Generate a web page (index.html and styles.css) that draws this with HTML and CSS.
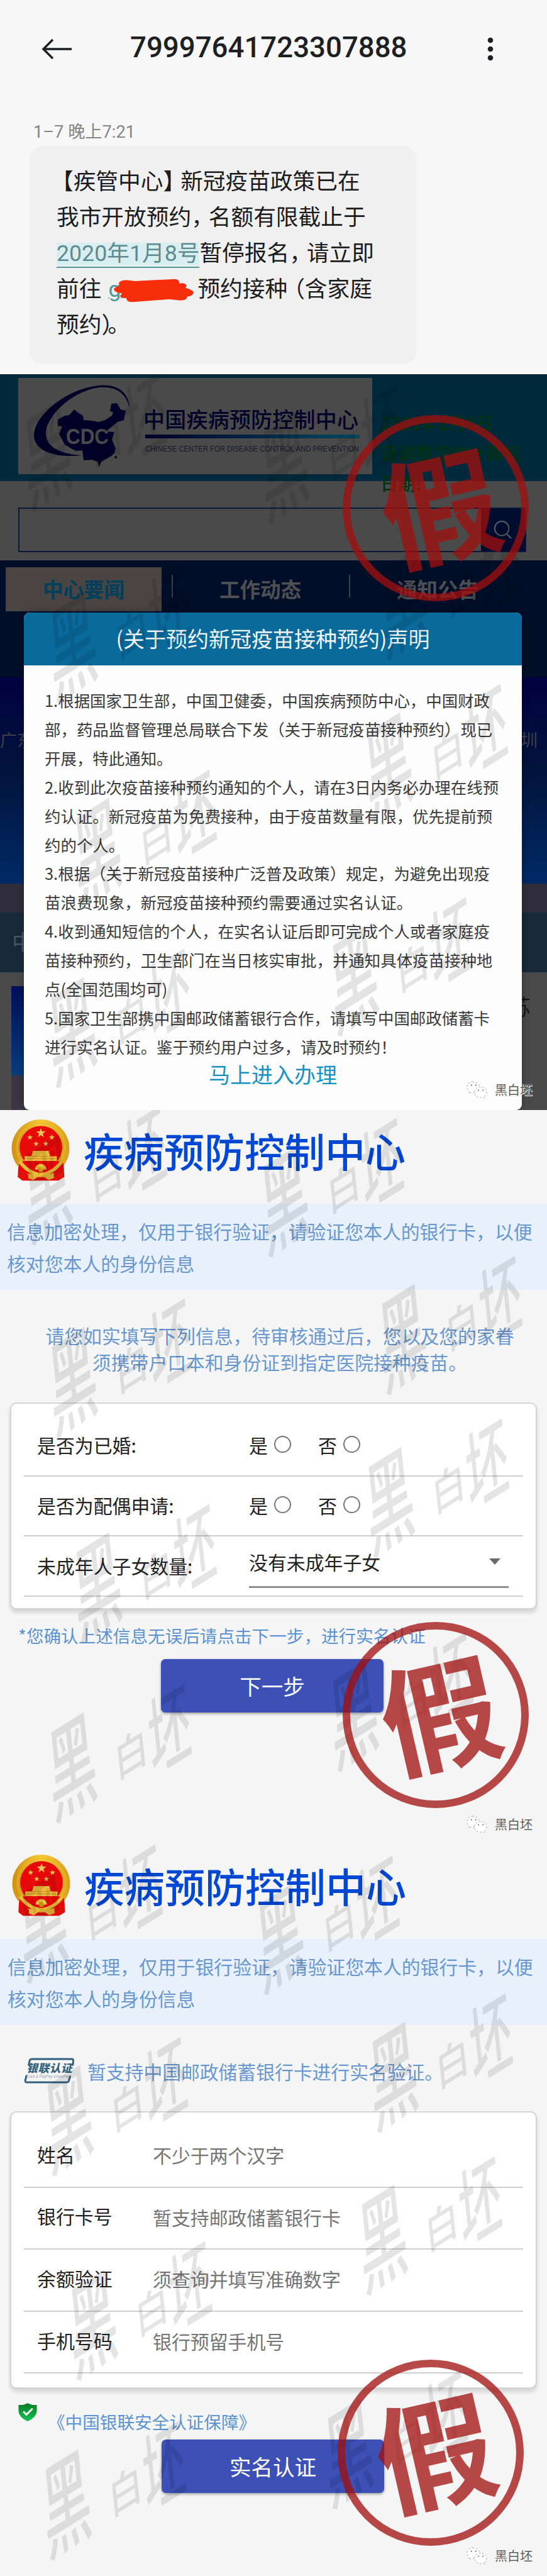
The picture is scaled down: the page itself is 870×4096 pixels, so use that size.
FILE: index.html
```html
<!DOCTYPE html>
<html lang="zh-CN">
<head>
<meta charset="utf-8">
<title>疫苗预约诈骗示例</title>
<link rel="stylesheet" href="styles.css">
</head>
<body>
<svg class="defs" width="0" height="0" aria-hidden="true">
  <defs>
    <linearGradient id="rule" x1="0" x2="1"><stop offset="0" stop-color="#000028"/><stop offset="1" stop-color="#00485e"/></linearGradient>
    <linearGradient id="gold" x1="0" x2="1"><stop offset="0" stop-color="#cf8f14"/><stop offset=".5" stop-color="#f6c936"/><stop offset="1" stop-color="#d99f1c"/></linearGradient>
    <linearGradient id="green" x1="0" y1="0" x2="0" y2="1"><stop offset="0" stop-color="#0a7a22"/><stop offset="1" stop-color="#12c455"/></linearGradient>
    <polygon id="star" points="0,-10 2.5,-3 10,-3 4,1.5 6,9 0,4.5 -6,9 -4,1.5 -10,-3 -2.5,-3"/>
    <symbol id="emblem" viewBox="60 38 326 350">
      <path d="M100 285 L350 285 L356 364 L322 384 L122 384 L96 364Z" fill="#e00f0a"/>
      <circle cx="223" cy="204" r="161" fill="url(#gold)"/>
      <circle cx="225" cy="198" r="134" fill="none" stroke="#e9b92c" stroke-width="8" stroke-dasharray="9 5"/>
      <circle cx="225" cy="198" r="119" fill="#e8090a"/>
      <path d="M104 285L128 275H322L350 285L354 330L300 345H150L100 330Z" fill="#e8090a"/>
      <path d="M112 268Q160 335 224 340Q290 335 336 268L348 284Q300 352 224 356Q146 352 100 284Z" fill="#edbd38"/>
      <g fill="#ecc65a">
        <use href="#star" transform="translate(225 118) scale(2.7)"/>
        <use href="#star" transform="translate(164 142) scale(1.6)"/>
        <use href="#star" transform="translate(286 142) scale(1.6)"/>
        <use href="#star" transform="translate(198 178) scale(1.5)"/>
        <use href="#star" transform="translate(252 178) scale(1.5)"/>
      </g>
      <path d="M180 218H268L276 248H314V274H134V248H172Z" fill="#eebc3c"/>
      <path d="M176 249H272M140 262H308" stroke="#c98a18" stroke-width="4"/>
      <path d="M192 322A32 32 0 0 1 256 322Z" fill="#f2c53c"/>
      <circle cx="224" cy="322" r="14" fill="#d99f1c"/>
      <path d="M155 345Q225 372 296 340L298 368L268 380L240 362H208L182 380L155 372Z" fill="#e8b43a"/>
    </symbol>
    <symbol id="mark" viewBox="0 0 302 222" overflow="visible">
      <text class="brush" transform="translate(38 196) rotate(-32) skewX(-26) scale(.78 1.3)" font-size="112">黑</text>
      <text class="brush" transform="translate(139 134) rotate(-32) skewX(-26)" font-size="62">白</text>
      <text class="brush" transform="translate(196 124) rotate(-32) skewX(-26) scale(.74 1.16)" font-size="104">坯</text>
    </symbol>
    <symbol id="wechat" viewBox="0 0 38 32">
      <g fill="#fff" stroke="#8b8b8b" stroke-width=".9" stroke-dasharray="3 3.4">
        <path d="M12 1C5 1 1 5.500 1 11c0 3.500 1.500 6 4 8l-1 4 4.500-2.500c7 1.500 15-2 15-9.500C23.500 5 19 1 12 1Z"/>
        <path d="M26 11c-7 0-11.500 4-11.500 9.500S19 30 26 30c1.500 0 3-.3 4.500-.8L34 31l-.8-3.500c2.400-1.800 3.800-4.200 3.800-7C37 15 32.500 11 26 11Z"/>
      </g>
      <g fill="#666"><circle cx="9" cy="7.500" r="1.200"/><circle cx="17" cy="7.500" r="1.200"/><circle cx="22" cy="16.500" r="1.100"/><circle cx="30" cy="16.500" r="1.100"/></g>
    </symbol>
  </defs>
</svg>

<main class="page">
  <section class="sms">
    <header class="sms-bar">
      <svg class="back" viewBox="0 0 50 34"><path d="M18 2L3 17L18 32M3 17H48" fill="none" stroke="#1d1f22" stroke-width="3.400"/></svg>
      <h1 class="sender">79997641723307888</h1>
      <svg class="more" viewBox="0 0 10 38"><g fill="#1d1f22"><circle cx="5" cy="5" r="4.300"/><circle cx="5" cy="19" r="4.300"/><circle cx="5" cy="33" r="4.300"/></g></svg>
    </header>
    <p class="stamp-time">1–7 晚上7:21</p>
    <div class="bubble">
      <p><span class="open">【</span>疾管中心<span class="t">】</span>新冠疫苗政策已在</p>
      <p>我市开放预约<span class="t">，</span>名额有限截止于</p>
      <p><a class="date">2020年1月8号</a>暂停报名<span class="t">，</span>请立即</p>
      <p class="mixed"><span>前往</span><span class="redacted"><a class="url">g</a><svg class="blob" viewBox="0 0 128 58" preserveAspectRatio="none"><path d="M8 10Q12 3 22 4L34 6L98 1Q105 3 104 12Q113 9 116 17L114 22Q127 28 127 34Q125 43 116 44Q118 52 106 53L88 50L30 57Q20 57 20 47Q11 49 10 42L13 36Q0 33 0 26Q2 19 9 18Z" fill="#f62e0a"/></svg></span><span>预约接种<span class="o">（</span>含家庭</span></p>
      <p>预约<span class="t">）</span>。</p>
    </div>
  </section>

  <section class="portal">
    <div class="brand-band">
      <svg class="cdc" viewBox="0 0 563 153">
        <path d="M177 48C176 20 154 9 128 12C75 18 25 60 25 92C25 116 60 128 101 123C70 121 46 112 44 90C43 62 85 20 130 15C155 13 172 24 177 48Z" fill="#000028"/>
        <path d="M63 66L74 60L81 59L89 50L95 55L103 60L104 67L118 68L128 70L138 67L149 60L151 54L146 53L148 41L157 40L163 50L171 52L168 67L158 70L149 77L140 85L153 86L149 98L155 112L153 119L148 124L132 133L129 141L126 133L117 130L104 131L102 115L92 116L84 112L74 106L65 89L70 77L63 76Z" fill="#000028"/>
        <circle cx="155" cy="126" r="2" fill="#000028"/>
        <text class="cdc-abbr" x="76" y="105" textLength="68" lengthAdjust="spacingAndGlyphs">CDC</text>
        <text class="cdc-name" x="199" y="79" textLength="342">中国疾病预防控制中心</text>
        <rect x="202" y="90" width="341" height="6" fill="url(#rule)"/>
        <text class="cdc-en" x="202" y="117" textLength="340" lengthAdjust="spacingAndGlyphs">CHINESE CENTER FOR DISEASE CONTROL AND PREVENTION</text>
      </svg>
      <p class="clock">2021年1月8日<br>请调整您的计算机<br>日期!</p>
    </div>
    <div class="search-row">
      <div class="search"><span class="search-btn"><svg viewBox="0 0 34 36"><circle cx="15" cy="15" r="12" /><path d="M23 24L31 32"/></svg></span></div>
    </div>
    <nav class="tabs"><span class="tab on">中心要闻</span><span class="tab">工作动态</span><span class="tab">通知公告</span></nav>
    <div class="hero"><span>广东</span><span>圳</span></div>
    <div class="strip"></div>
    <div class="bar">中</div>
    <div class="cards"><div class="thumb"></div><span class="side">苏</span></div>

    <article class="dialog">
      <h2>(关于预约新冠疫苗接种预约)声明</h2>
      <div class="terms">
        <p>1.根据国家卫生部，中国卫健委，中国疾病预防中心，中国财政<br>部，药品监督管理总局联合下发（关于新冠疫苗接种预约）现已<br>开展，特此通知。</p>
        <p>2.收到此次疫苗接种预约通知的个人，请在3日内务必办理在线预<br>约认证。新冠疫苗为免费接种，由于疫苗数量有限，优先提前预<br>约的个人。</p>
        <p>3.根据（关于新冠疫苗接种广泛普及政策）规定，为避免出现疫<br>苗浪费现象，新冠疫苗接种预约需要通过实名认证。</p>
        <p>4.收到通知短信的个人，在实名认证后即可完成个人或者家庭疫<br>苗接种预约，卫生部门在当日核实审批，并通知具体疫苗接种地<br>点(全国范围均可)</p>
        <p>5.国家卫生部携中国邮政储蓄银行合作，请填写中国邮政储蓄卡<br>进行实名认证。鉴于预约用户过多，请及时预约！</p>
      </div>
      <a class="enter">马上进入办理</a>
    </article>

    <svg class="marks" viewBox="0 595 870 1170" aria-hidden="true">
      <use href="#mark" x="7" y="610" width="302" height="222"/><use href="#mark" x="384" y="629" width="302" height="222"/>
      <use href="#mark" x="572" y="848" width="302" height="222"/><use href="#mark" x="47" y="915" width="302" height="222"/>
      <use href="#mark" x="549" y="1106" width="302" height="222"/><use href="#mark" x="86" y="1242" width="302" height="222"/>
      <use href="#mark" x="494" y="1445" width="302" height="222"/><use href="#mark" x="46" y="1527" width="302" height="222"/>
    </svg>
    <div class="fake fake-a"><span>假</span></div>
    <div class="credit"><svg><use href="#wechat"/></svg>黑白坯</div>
  </section>

  <section class="form-page first">
    <header class="head"><svg class="emblem"><use href="#emblem"/></svg><h2>疾病预防控制中心</h2></header>
    <p class="notice">信息加密处理，仅用于银行验证，请验证您本人的银行卡，以便<br>核对您本人的身份信息</p>
    <p class="lead">请您如实填写下列信息，待审核通过后，您以及您的家眷<br>须携带户口本和身份证到指定医院接种疫苗。</p>
    <div class="card">
      <div class="row"><label>是否为已婚:</label><div class="radios"><span>是<i></i></span><span>否<i></i></span></div></div>
      <div class="row"><label>是否为配偶申请:</label><div class="radios"><span>是<i></i></span><span>否<i></i></span></div></div>
      <div class="row"><label>未成年人子女数量:</label><div class="select">没有未成年子女<b></b></div></div>
    </div>
    <p class="hint">*您确认上述信息无误后请点击下一步，进行实名认证</p>
    <button class="btn">下一步</button>
    <svg class="marks" viewBox="0 1765 870 1168" aria-hidden="true">
      <use href="#mark" x="7" y="1777" width="302" height="222"/><use href="#mark" x="384" y="1796" width="302" height="222"/>
      <use href="#mark" x="572" y="2015" width="302" height="222"/><use href="#mark" x="47" y="2083" width="302" height="222"/>
      <use href="#mark" x="551" y="2274" width="302" height="222"/><use href="#mark" x="86" y="2410" width="302" height="222"/>
      <use href="#mark" x="494" y="2614" width="302" height="222"/><use href="#mark" x="46" y="2696" width="302" height="222"/>
    </svg>
    <div class="fake fake-b"><span>假</span></div>
    <div class="credit"><svg><use href="#wechat"/></svg>黑白坯</div>
  </section>

  <section class="form-page second">
    <header class="head"><svg class="emblem"><use href="#emblem"/></svg><h2>疾病预防控制中心</h2></header>
    <p class="notice">信息加密处理，仅用于银行验证，请验证您本人的银行卡，以便<br>核对您本人的身份信息</p>
    <div class="support">
      <svg class="union" viewBox="0 0 82 42"><path d="M7 13L9 4Q10 2 13 2H78Q80 2 80 5L79 13M75 29L73 37Q72 40 69 40H4Q1 40 2 36L4 28" fill="none" stroke="#315f7c" stroke-width="3"/><text class="union-cn" x="4" y="24" textLength="74">银联认证</text><text class="union-en" x="4" y="33" textLength="70" lengthAdjust="spacingAndGlyphs">Card &amp; PayPay UnionPay</text></svg>
      <span>暂支持中国邮政储蓄银行卡进行实名验证。</span>
    </div>
    <div class="card">
      <div class="row"><label>姓名</label><span class="ph">不少于两个汉字</span></div>
      <div class="row"><label>银行卡号</label><span class="ph">暂支持邮政储蓄银行卡</span></div>
      <div class="row"><label>余额验证</label><span class="ph">须查询并填写准确数字</span></div>
      <div class="row"><label>手机号码</label><span class="ph">银行预留手机号</span></div>
    </div>
    <div class="assure"><svg viewBox="0 0 30 30"><path d="M15 0Q21 4 30 3V14Q29 24 15 30Q1 24 0 14V3Q9 4 15 0Z" fill="url(#green)"/><path d="M8 14L13 19L23 9" fill="none" stroke="#fff" stroke-width="3"/></svg><span>《中国银联安全认证保障》</span></div>
    <button class="btn">实名认证</button>
    <svg class="marks" viewBox="0 2933 870 1163" aria-hidden="true">
      <use href="#mark" x="0" y="2951" width="302" height="222"/><use href="#mark" x="377" y="2969" width="302" height="222"/>
      <use href="#mark" x="557" y="3188" width="302" height="222"/><use href="#mark" x="40" y="3257" width="302" height="222"/>
      <use href="#mark" x="540" y="3447" width="302" height="222"/><use href="#mark" x="79" y="3582" width="302" height="222"/>
      <use href="#mark" x="486" y="3787" width="302" height="222"/><use href="#mark" x="37" y="3868" width="302" height="222"/>
    </svg>
    <div class="fake fake-c"><span>假</span></div>
    <div class="credit"><svg><use href="#wechat"/></svg>黑白坯</div>
  </section>
</main>
</body>
</html>
```
FILE: styles.css
```css
* { box-sizing: border-box; }
body { margin: 0; background: #f5f5f5; font-family: "Noto Sans CJK SC", "Noto Sans", sans-serif; }
h1, h2, p { margin: 0; }
.defs { position: absolute; }
.page { width: 870px; height: 4096px; overflow: hidden; }
section { position: relative; overflow: hidden; white-space: nowrap; }

/* message thread */
.sms { height: 595px; background: #f7f7f7; font-family: Roboto, "Noto Sans CJK SC", sans-serif; }
.sms-bar { display: flex; align-items: center; height: 155px; padding: 0 85px 0 66px; }
.back { width: 50px; height: 34px; }
.sender { margin-left: 91px; width: 440px; font-size: 45.600px; font-weight: 500; line-height: 60px; padding-bottom: 4px; color: #1d1f22; }
.more { width: 10px; height: 38px; margin-left: auto; }
.stamp-time { margin: 34px 0 0 53px; height: 43px; font-size: 27.200px; line-height: 43px; color: #858585; }
.bubble { width: 616px; height: 347px; margin-left: 47px; padding: 29px 0 0 43px; border-radius: 22px; background: #f0f0f1; font-size: 35.700px; line-height: 57px; color: #1c1c1c; }
.bubble p { height: 57px; }
.open { margin-left: -9px; }
.t { margin-right: -8px; }
.o { margin-left: -8px; }
.date { color: #5c8c90; background: linear-gradient(#d9eef0, #d9eef0) 0 60%/100% 36px no-repeat; border-bottom: 2px solid #4e9a98; }
.mixed { display: flex; }
.redacted { width: 138px; margin: 0 4px 0 11px; position: relative; }
.url { color: #4e9a98; text-decoration: underline; text-decoration-thickness: 2px; }
.blob { position: absolute; left: 9px; top: 11px; width: 128px; height: 38px; }

/* portal behind the dialog */
.portal { height: 1170px; background: #4a4a4a; }
.brand-band { display: flex; height: 170px; padding: 6px 0 0 29px; background: #002a3c; }
.cdc { width: 563px; height: 153px; background: #4a4a4a; }
.cdc-abbr { font: bold 35px "Liberation Sans", sans-serif; fill: #4a4a4a; }
.cdc-name { font-size: 34px; font-weight: 500; fill: #000028; }
.cdc-en { font: 13px "Liberation Sans", sans-serif; fill: #17172a; }
.clock { margin: 47px 0 0 13px; height: 144px; font-size: 28px; font-weight: 500; line-height: 48px; color: #00330f; }
.search-row { height: 126px; padding: 42px 33px 0 29px; }
.search { height: 71px; border: 2px solid #0a1838; display: flex; justify-content: flex-end; }
.search-btn { width: 70px; background: #000c30; display: flex; align-items: center; justify-content: center; }
.search-btn svg { width: 32px; height: 34px; fill: none; stroke: #555a60; stroke-width: 2.200; }
.tabs { display: flex; align-items: flex-start; height: 186px; padding: 11px 0 0 9px; background: #000e28; }
.tab { width: 282px; height: 70px; font-size: 32.500px; font-weight: 700; line-height: 67px; text-align: center; color: #4d4f52; }
.tab.on { width: 248px; margin-right: 16px; background: #4a4542; color: #003f5c; }
.tab + .tab { position: relative; }
.tab + .tab::before { content: ""; position: absolute; left: 0; top: 12px; width: 2px; height: 36px; background: #3a4252; }
.hero { display: flex; justify-content: space-between; height: 328px; padding: 76px 15px 0 0; background: linear-gradient(#020140, #02143c 45%, #002a66); font-size: 27px; line-height: 46px; color: #3d4048; }
.strip { height: 46px; background: #302d3c; }
.bar { height: 95px; padding-left: 19px; background: #172a3a; font-size: 34px; line-height: 92px; color: #4a5560; }
.cards { display: flex; justify-content: space-between; height: 219px; padding: 22px 26px 0 18px; }
.thumb { width: 60px; height: 200px; background: linear-gradient(#000f58, #083c78 70%, #3a3644 72%, #3a3644); }
.side { font-size: 34px; line-height: 64px; color: #14171c; }

.dialog { position: absolute; left: 38px; top: 379px; width: 792px; height: 791px; border-radius: 9px; background: #fdfdfd; overflow: hidden; box-shadow: 0 0 12px rgba(0,0,0,.3); }
.dialog h2 { height: 84px; background: #0b6a9c; color: #f2f8fb; font-size: 34px; font-weight: 400; line-height: 82px; text-align: center; }
.terms { padding: 32px 0 0 33px; font-size: 25.450px; line-height: 45.900px; color: #3a3a3a; }
.enter { display: block; line-height: 42px; text-align: center; font-size: 34px; color: #1592c2; }

/* overlays */
.marks { position: absolute; left: 0; top: 0; width: 100%; height: 100%; pointer-events: none; }
.brush { fill: #000; fill-opacity: .1; font-weight: 500; }
.fake { position: absolute; width: 296px; height: 296px; border: 12px solid rgba(160,16,16,.76); border-radius: 50%; color: rgba(160,16,16,.76); display: flex; align-items: center; justify-content: center; }
.fake span { font-size: 188px; font-weight: 700; line-height: 188px; transform: translate(5px, -9px) rotate(-13deg); }
.fake-a { left: 545px; top: 65px; }
.fake-b { left: 545px; top: 814px; }
.fake-c { left: 537px; top: 819px; }
.credit { position: absolute; left: 742px; bottom: 16px; display: flex; align-items: center; gap: 12px; height: 32px; font-size: 20px; line-height: 32px; color: #5a5a5a; text-shadow: 0 0 2px #fff, 1px 1px 0 #fff; }
.credit svg { width: 33px; height: 30px; }

/* form pages */
.form-page { background: #f5f5f5; }
.first { height: 1168px; }
.second { height: 1163px; }
.head { display: flex; align-items: flex-start; height: 149px; padding: 13px 0 0 18px; }
.emblem { width: 93px; height: 101px; }
.head h2 { margin-left: 22px; font-size: 64px; font-weight: 500; line-height: 100px; color: #0048d4; }
.notice { height: 137px; padding: 18px 0 0 11px; background: #e7f0fb; font-size: 29.850px; line-height: 51.300px; color: #6898cf; }
.lead { height: 179px; padding: 52px 0 0 20px; font-size: 29.800px; line-height: 41.500px; text-align: center; color: #6898cf; }
.card { width: 838px; margin-left: 16px; padding: 20px 20px 0; border: 2px solid #d4d4d4; border-radius: 10px; background: #fefefe; box-shadow: 0 5px 6px rgba(0,0,0,.14); font-size: 29.900px; color: #222; }
.row { display: flex; align-items: center; height: 95.700px; padding: 0 0 3px 21px; border-bottom: 2px solid #cfcfcf; line-height: 50px; }
.first .card { height: 329px; }
.first .row label { width: 337px; }
.radios { display: flex; gap: 43px; }
.radios span { display: flex; align-items: center; gap: 10px; }
.radios i { width: 27px; height: 27px; border: 2px solid #777; border-radius: 50%; margin-top: -2px; }
.select { display: flex; align-items: center; justify-content: space-between; width: 413px; height: 72px; padding: 0 13px 8px 0; border-bottom: 3px solid #8f8f8f; }
.select b { border: solid transparent; border-width: 10px 9px 0; border-top-color: #6a6a6a; }
.hint { padding-left: 29px; margin-top: 17px; font-size: 27.600px; line-height: 48px; color: #5c93d2; }
.btn { display: block; width: 354px; height: 85px; margin: 14px 0 0 256px; padding: 0; border: 0; border-radius: 7px; background: #3c50b5; box-shadow: 0 2px 4px rgba(0,0,0,.35); color: #fff; font: 34.500px/81px "Noto Sans CJK SC", sans-serif; }

.second .head { height: 150px; padding: 14px 0 0 19px; }
.second .notice { padding-left: 12px; }
.support { display: flex; height: 137px; padding: 52px 0 0 38px; font-size: 29.800px; line-height: 42px; color: #6898cf; }
.union { width: 81px; height: 41px; margin-right: 20px; }
.union-cn { font-size: 18px; font-weight: 900; font-style: italic; fill: #35637e; }
.union-en { font: 7px "Liberation Sans", sans-serif; fill: #9aa5ad; }
.second .card { height: 441px; padding-top: 21px; }
.second .row { height: 98.600px; padding-bottom: 7px; }
.second .row label { width: 184px; }
.ph { color: #757575; margin-top: 3px; }
.assure { display: flex; align-items: flex-start; height: 70px; margin-top: 11px; padding: 12px 0 0 29px; font-size: 27.600px; line-height: 42px; color: #5c93d2; }
.assure svg { width: 30px; height: 29px; margin-right: 17px; }
.assure span { margin-top: 8px; }
.second .btn { margin: 0 0 0 257px; }
```
